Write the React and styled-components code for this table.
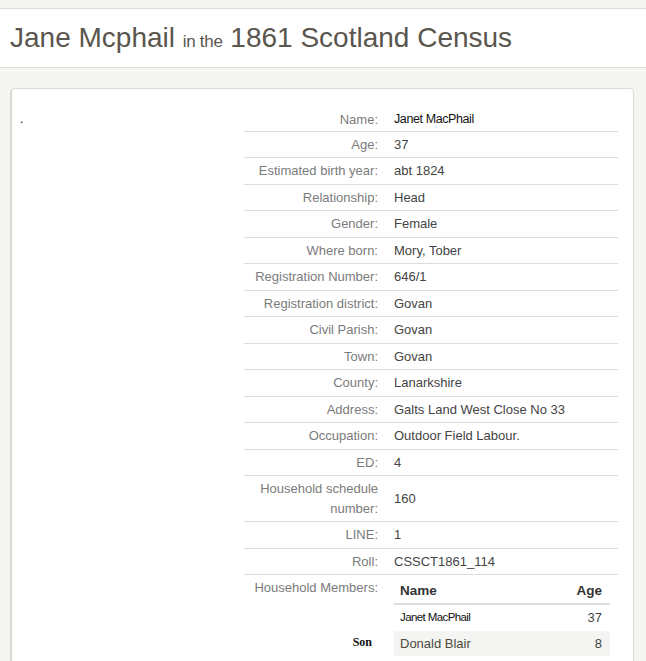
import React from 'react';
import styled, { createGlobalStyle } from 'styled-components';

const GlobalStyle = createGlobalStyle`
  html, body {
    margin: 0;
    padding: 0;
    background: #f5f5f1;
    font-family: "Liberation Sans", Arial, sans-serif;
  }
`;

const Page = styled.div`
  width: 646px;
  min-height: 661px;
  background: #f5f5f1;
  padding-top: 8px;
  box-sizing: border-box;
`;

const Header = styled.header`
  background: #fff;
  border-top: 1px solid #dcdcd8;
  border-bottom: 1px solid #dcdcd8;
  height: 58px;
  display: flex;
  align-items: center;
  padding: 0 10px;
`;

const Title = styled.h1`
  margin: 0;
  font-weight: normal;
  font-size: 28px;
  color: #5a564e;
`;

const Small = styled.small`
  font-size: 17px;
  letter-spacing: -0.3px;
`;

const Body = styled.main`
  padding: 20px 12px 0 10px;
`;

const Card = styled.section`
  background: #fff;
  border: 1px solid #dcdcd6;
  border-left: 2px solid #d8d8d2;
  border-radius: 5px;
  display: grid;
  grid-template-columns: 232px 374px;
  padding: 17px 15px 0 0;
  min-height: 580px;
`;

const Side = styled.div`
  padding: 6px 0 0 8px;
  font-size: 12px;
  color: #000;
`;

const Table = styled.table`
  border-collapse: collapse;
  width: 374px;
  align-self: start;
  font-size: 13px;
`;

const Row = styled.tr`
  border-top: 1px solid ${({ $first }) => ($first ? 'transparent' : '#dddddd')};

  & > th, & > td {
    padding-bottom: ${({ $first }) => ($first ? '1px' : '3px')};
  }
`;

const Label = styled.th`
  width: 126px;
  padding: 3px 8px;
  line-height: 19.5px;
  text-align: right;
  font-weight: normal;
  color: #7b7b7b;
  vertical-align: ${({ $top }) => ($top ? 'top' : 'middle')};
`;

const Value = styled.td`
  padding: 3px 8px;
  line-height: 19.5px;
  color: ${({ $strong }) => ($strong ? '#111' : '#444')};
  font-size: ${({ $strong }) => ($strong ? '12.5px' : '13px')};
  letter-spacing: ${({ $strong }) => ($strong ? '-0.4px' : '0')};
`;

const Stray = styled.div`
  margin-top: 35px;
  padding-right: 6px;
  font-family: "Liberation Serif", "Times New Roman", serif;
  font-weight: bold;
  font-size: 12px;
  color: #111;
`;

const Members = styled.table`
  border-collapse: collapse;
  width: 100%;
  font-size: 13px;
`;

const Head = styled.th`
  text-align: ${({ $right }) => ($right ? 'right' : 'left')};
  padding: 3px 8px 3px 6px;
  line-height: 19px;
  font-size: 13.5px;
  color: #333;
  border-bottom: 2px solid #dddddd;
`;

const MemberRow = styled.tr`
  background: ${({ $striped }) => ($striped ? '#f4f4f2' : '#fff')};
`;

const Cell = styled.td`
  padding: 3px 8px 3px 6px;
  line-height: 19.5px;
  text-align: ${({ $right }) => ($right ? 'right' : 'left')};
  color: ${({ $tone }) => $tone || '#444'};
  font-size: ${({ $size }) => $size || '13px'};
  letter-spacing: ${({ $tight }) => ($tight ? '-0.6px' : '0')};
`;

const facts = [
  ['Age:', '37'],
  ['Estimated birth year:', 'abt 1824'],
  ['Relationship:', 'Head'],
  ['Gender:', 'Female'],
  ['Where born:', 'Mory, Tober'],
  ['Registration Number:', '646/1'],
  ['Registration district:', 'Govan'],
  ['Civil Parish:', 'Govan'],
  ['Town:', 'Govan'],
  ['County:', 'Lanarkshire'],
  ['Address:', 'Galts Land West Close No 33'],
  ['Occupation:', 'Outdoor Field Labour.'],
  ['ED:', '4'],
  ['Household schedule number:', '160'],
  ['LINE:', '1'],
  ['Roll:', 'CSSCT1861_114'],
];

const App = () => (
  <>
    <GlobalStyle />
    <Page>
      <Header>
        <Title>
          Jane Mcphail <Small>in the</Small> 1861 Scotland Census
        </Title>
      </Header>
      <Body>
        <Card>
          <Side>.</Side>
          <Table>
            <tbody>
              <Row $first>
                <Label>Name:</Label>
                <Value $strong>Janet MacPhail</Value>
              </Row>
              {facts.map(([label, value]) => (
                <Row key={label}>
                  <Label>{label}</Label>
                  <Value>{value}</Value>
                </Row>
              ))}
              <Row>
                <Label $top>
                  Household Members:
                  <Stray>Son</Stray>
                </Label>
                <Value>
                  <Members>
                    <thead>
                      <tr>
                        <Head>Name</Head>
                        <Head $right>Age</Head>
                      </tr>
                    </thead>
                    <tbody>
                      <MemberRow>
                        <Cell $size="11.5px" $tone="#111" $tight>Janet MacPhail</Cell>
                        <Cell $right>37</Cell>
                      </MemberRow>
                      <MemberRow $striped>
                        <Cell $tone="#4b4a3c">Donald Blair</Cell>
                        <Cell $right>8</Cell>
                      </MemberRow>
                    </tbody>
                  </Members>
                </Value>
              </Row>
            </tbody>
          </Table>
        </Card>
      </Body>
    </Page>
  </>
);

export default App;
